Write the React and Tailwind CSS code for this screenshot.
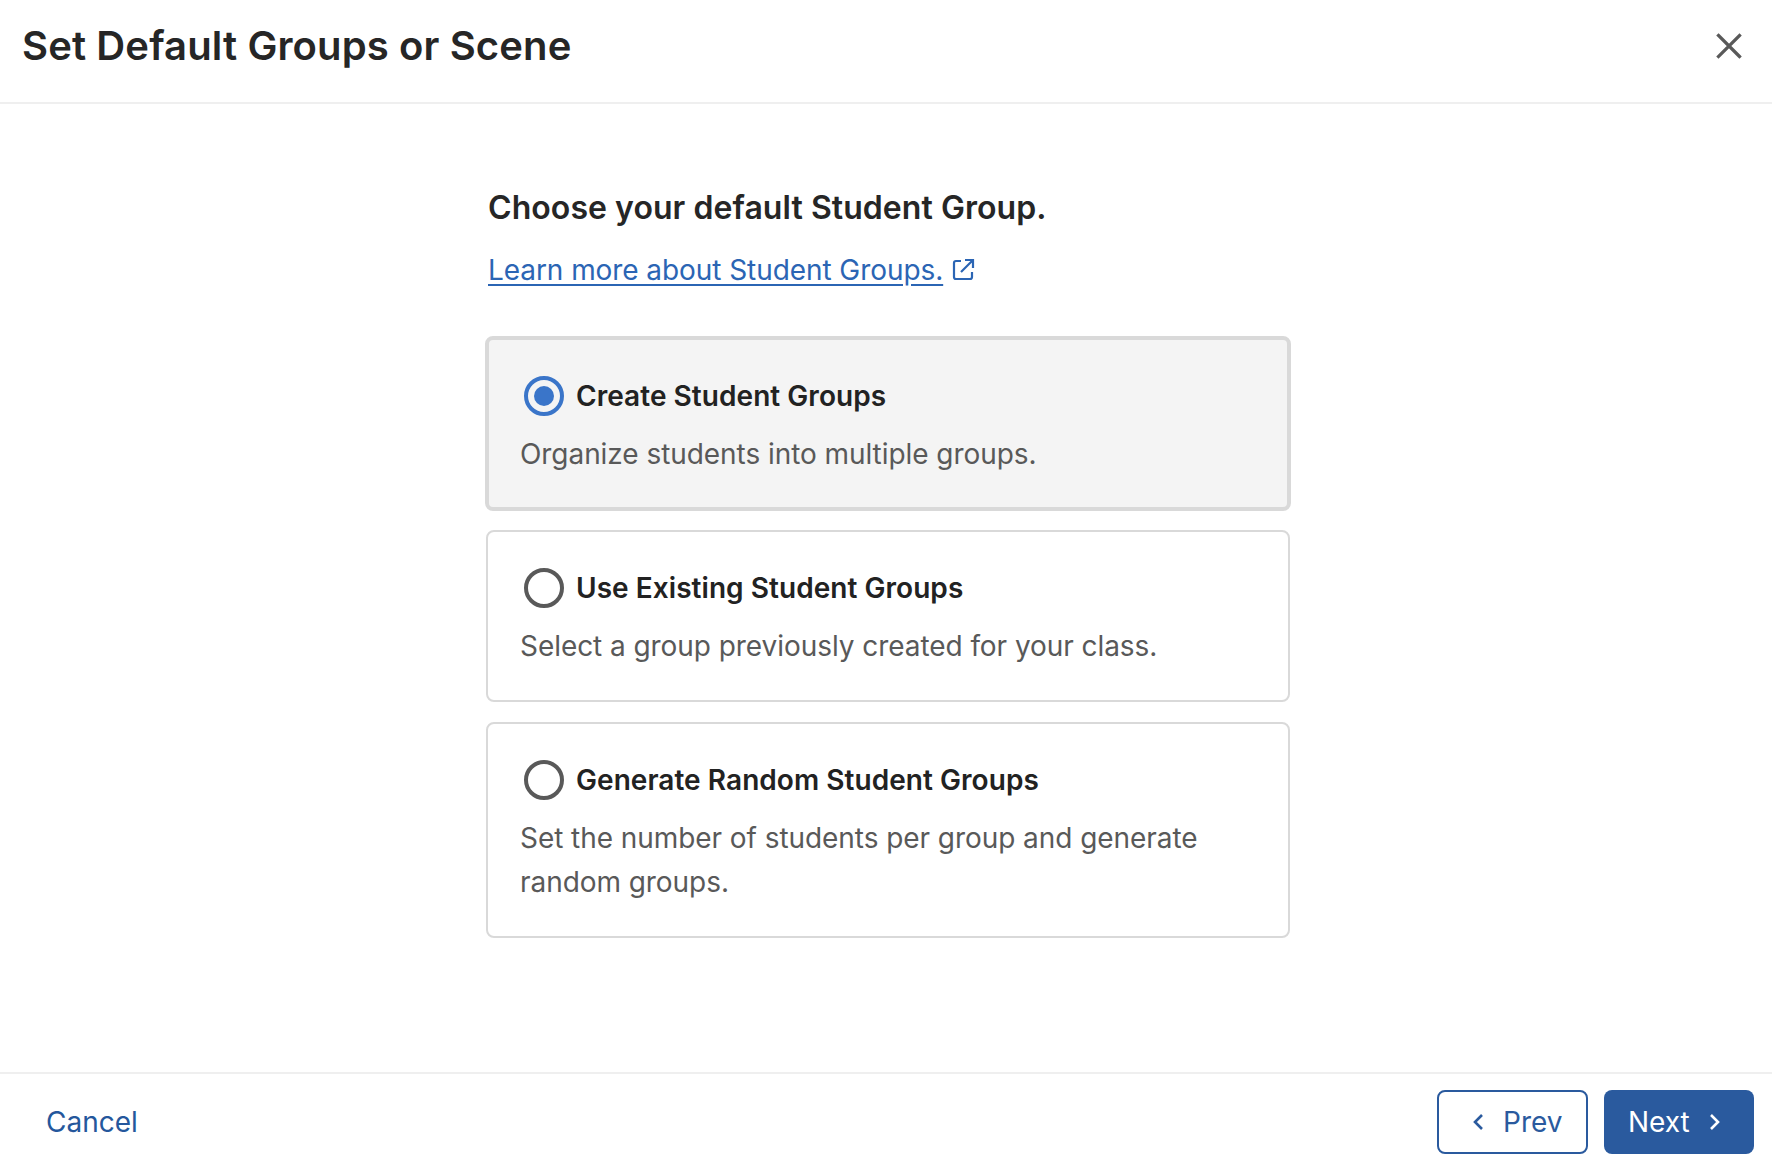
import React from "react";

function Radio({ checked }) {
  return (
    <span className={`flex h-10 w-10 shrink-0 items-center justify-center rounded-full border-4 ${checked ? "border-[#3a75c9]" : "border-[#595959]"}`}>
      {checked && <span className="h-5 w-5 rounded-full bg-[#3a75c9]" />}
    </span>
  );
}

function Card({ title, desc, checked, className }) {
  return (
    <div className={`rounded-lg pr-8 ${className}`}>
      <div className="flex items-center gap-3 pl-1">
        <Radio checked={checked} />
        <span className="text-[28px] font-semibold leading-10 tracking-[0.05px] text-[#222222]">{title}</span>
      </div>
      <p className="mt-4 text-[28px] leading-[44px] tracking-[-0.06px] text-[#595959]">{desc}</p>
    </div>
  );
}

export default function App() {
  return (
    <div className="flex h-[1156px] w-[1772px] flex-col bg-white font-['Inter',sans-serif]">
      <header className="flex h-[104px] shrink-0 items-center justify-between border-b-2 border-[#efefef] pb-[10px] pl-[22px] pr-[30px]">
        <h1 className="text-[40px] font-semibold leading-[48px] tracking-[0.12px] text-[#262626]">Set Default Groups or Scene</h1>
        <svg width="26" height="26" viewBox="0 0 26 26" fill="none" stroke="#595959" strokeWidth="3.2" strokeLinecap="square">
          <path d="M2.5 2.5 23.5 23.5M23.5 2.5 2.5 23.5" />
        </svg>
      </header>
      <main className="flex-1">
        <div className="ml-[486px] w-[804px] pt-[84px]">
          <h2 className="pl-[2px] text-[32px] font-semibold leading-10 tracking-[0.06px] text-[#262626]">Choose your default Student Group.</h2>
          <a className="mt-[22px] flex items-center gap-2 pl-[2px] text-[28px] leading-10 tracking-[-0.07px] text-[#2b65b4]">
            <span className="underline underline-offset-4">Learn more about Student Groups.</span>
            <svg width="24" height="24" viewBox="0 0 24 24" fill="none" stroke="#2b65b4" strokeWidth="2.2">
              <path d="M10 3H5a2 2 0 0 0-2 2v14a2 2 0 0 0 2 2h14a2 2 0 0 0 2-2v-5M14 2h8v8M22 2 10 14" />
            </svg>
          </a>
          <div className="mt-[46px] flex flex-col gap-[19px]">
            <Card
              checked
              className="mx-[-1px] border-4 border-[#d9d9d9] bg-[#f4f4f4] pb-[31px] pl-[31px] pt-[36px]"
              title="Create Student Groups"
              desc="Organize students into multiple groups."
            />
            <Card
              className="border-2 border-[#d9d9d9] bg-white pb-[32px] pl-[32px] pt-[36px]"
              title="Use Existing Student Groups"
              desc="Select a group previously created for your class."
            />
            <Card
              className="mt-px border-2 border-[#d9d9d9] bg-white pb-[32px] pl-[32px] pt-[36px]"
              title="Generate Random Student Groups"
              desc="Set the number of students per group and generate random groups."
            />
          </div>
        </div>
      </main>
      <footer className="flex h-[84px] shrink-0 items-start justify-between border-t-2 border-[#efefef] pl-[46px] pr-[18px] pt-[16px]">
        <button className="flex h-16 items-center text-[28px] text-[#24579c]">Cancel</button>
        <div className="flex gap-4">
          <button className="flex h-16 w-[151px] items-center gap-[18px] rounded-lg border-2 border-[#2a5a9e] pl-[32px] text-[28px] text-[#2a5a9e]">
            <svg width="14" height="20" viewBox="0 0 14 20" fill="none" stroke="currentColor" strokeWidth="2.6"><path d="M11 3 4 10l7 7" /></svg>
            Prev
          </button>
          <button className="flex h-16 w-[150px] items-center gap-[18px] rounded-lg bg-[#2a5a9e] pl-[24px] text-[28px] text-white">
            Next
            <svg width="14" height="20" viewBox="0 0 14 20" fill="none" stroke="currentColor" strokeWidth="2.6"><path d="m3 3 7 7-7 7" /></svg>
          </button>
        </div>
      </footer>
    </div>
  );
}
